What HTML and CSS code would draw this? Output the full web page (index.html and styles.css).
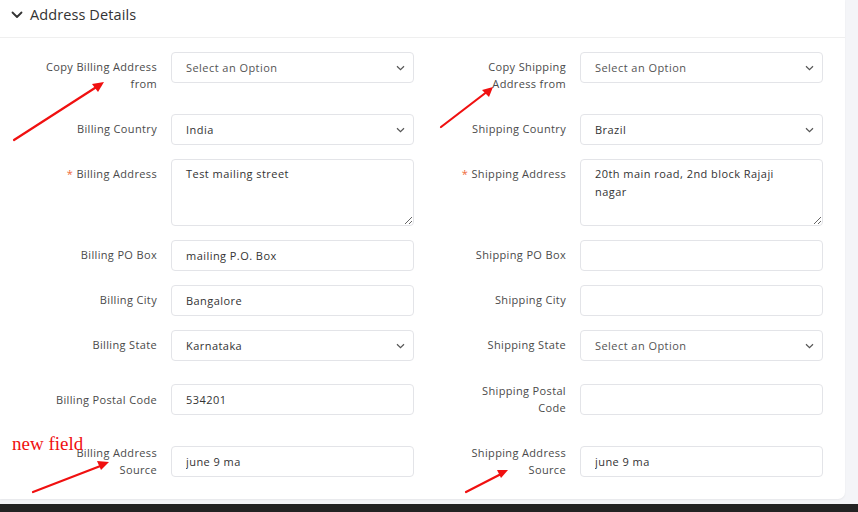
FILE: index.html
```html
<!DOCTYPE html>
<html>
<head>
<meta charset="utf-8">
<link rel="stylesheet" href="styles.css">
</head>
<body>
<div class="page">
  <section class="card">
    <header class="card-head">
      <svg class="head-chev" width="12" height="8" viewBox="0 0 12 8"><path d="M1.5 1.5 L6 6 L10.5 1.5" fill="none" stroke="#333" stroke-width="1.8" stroke-linecap="round" stroke-linejoin="round"/></svg>
      <span class="head-title">Address Details</span>
    </header>
    <div class="fields">
      <div class="field">
        <label class="lbl">Copy Billing Address<br>from</label>
        <div class="ctrl select"><span class="ph">Select an Option</span><svg class="chev" width="9" height="6" viewBox="0 0 9 6"><path d="M1 1.2 L4.5 4.6 L8 1.2" fill="none" stroke="#555" stroke-width="1.2"/></svg></div>
      </div>
      <div class="field">
        <label class="lbl">Copy Shipping<br>Address from</label>
        <div class="ctrl select"><span class="ph">Select an Option</span><svg class="chev" width="9" height="6" viewBox="0 0 9 6"><path d="M1 1.2 L4.5 4.6 L8 1.2" fill="none" stroke="#555" stroke-width="1.2"/></svg></div>
      </div>

      <div class="field">
        <label class="lbl">Billing Country</label>
        <div class="ctrl select"><span>India</span><svg class="chev" width="9" height="6" viewBox="0 0 9 6"><path d="M1 1.2 L4.5 4.6 L8 1.2" fill="none" stroke="#555" stroke-width="1.2"/></svg></div>
      </div>
      <div class="field">
        <label class="lbl">Shipping Country</label>
        <div class="ctrl select"><span>Brazil</span><svg class="chev" width="9" height="6" viewBox="0 0 9 6"><path d="M1 1.2 L4.5 4.6 L8 1.2" fill="none" stroke="#555" stroke-width="1.2"/></svg></div>
      </div>

      <div class="field">
        <label class="lbl"><span class="req">*</span> Billing Address</label>
        <textarea class="ctrl area" readonly>Test mailing street</textarea>
      </div>
      <div class="field">
        <label class="lbl"><span class="req">*</span> Shipping Address</label>
        <textarea class="ctrl area" readonly>20th main road, 2nd block Rajaji nagar</textarea>
      </div>

      <div class="field">
        <label class="lbl">Billing PO Box</label>
        <input class="ctrl" value="mailing P.O. Box" readonly>
      </div>
      <div class="field">
        <label class="lbl">Shipping PO Box</label>
        <input class="ctrl" value="" readonly>
      </div>

      <div class="field">
        <label class="lbl">Billing City</label>
        <input class="ctrl" value="Bangalore" readonly>
      </div>
      <div class="field">
        <label class="lbl">Shipping City</label>
        <input class="ctrl" value="" readonly>
      </div>

      <div class="field">
        <label class="lbl">Billing State</label>
        <div class="ctrl select"><span>Karnataka</span><svg class="chev" width="9" height="6" viewBox="0 0 9 6"><path d="M1 1.2 L4.5 4.6 L8 1.2" fill="none" stroke="#555" stroke-width="1.2"/></svg></div>
      </div>
      <div class="field">
        <label class="lbl">Shipping State</label>
        <div class="ctrl select"><span class="ph">Select an Option</span><svg class="chev" width="9" height="6" viewBox="0 0 9 6"><path d="M1 1.2 L4.5 4.6 L8 1.2" fill="none" stroke="#555" stroke-width="1.2"/></svg></div>
      </div>

      <div class="field mid">
        <label class="lbl">Billing Postal Code</label>
        <input class="ctrl" value="534201" readonly>
      </div>
      <div class="field mid">
        <label class="lbl">Shipping Postal<br>Code</label>
        <input class="ctrl" value="" readonly>
      </div>

      <div class="field mid">
        <label class="lbl">Billing Address<br>Source</label>
        <input class="ctrl" value="june 9 ma" readonly>
      </div>
      <div class="field mid">
        <label class="lbl">Shipping Address<br>Source</label>
        <input class="ctrl" value="june 9 ma" readonly>
      </div>
    </div>
  </section>
  <footer class="bottom-bar"></footer>

  <div class="note">new field</div>
  <svg class="marks" width="858" height="512" viewBox="0 0 858 512">
    <g stroke="#f01010" stroke-width="2.2" fill="none" stroke-linecap="round">
      <line x1="14" y1="140" x2="98" y2="86"/>
      <line x1="441" y1="127" x2="488" y2="91"/>
      <line x1="33" y1="492" x2="103" y2="465"/>
      <line x1="466" y1="492" x2="503" y2="473"/>
    </g>
    <g fill="#f01010">
      <polygon points="104,82 92,84 98,92"/>
      <polygon points="493,87 482,90 489,97"/>
      <polygon points="109,462 97,461 101,470"/>
      <polygon points="508,470 497,470 501,478"/>
    </g>
  </svg>
</div>
</body>
</html>
```
FILE: styles.css
```css
* { box-sizing: border-box; }
html, body { margin: 0; padding: 0; }
body {
  background: #f4f5f8;
  font-family: "Open Sans", "Noto Sans", sans-serif;
  width: 858px;
  height: 512px;
  overflow: hidden;
}
.page {
  position: relative;
  width: 858px;
  height: 512px;
  display: flex;
  flex-direction: column;
}
.card {
  width: 845px;
  height: 499px;
  background: #fff;
  border-radius: 0 0 7px 0;
  box-shadow: 0 1px 2px rgba(0,0,0,0.06);
}
.card-head {
  display: flex;
  align-items: center;
  gap: 7px;
  height: 38px;
  padding: 4px 11px 11px;
  border-bottom: 1px solid #efefef;
}
.head-chev { display: block; }
.head-title {
  font-size: 14.5px;
  line-height: 22px;
  color: #333;
  letter-spacing: 0.1px;
}
.fields {
  display: grid;
  grid-template-columns: 377px 377px;
  column-gap: 32px;
  row-gap: 14px;
  padding: 14px 0 0 37px;
}
.field {
  display: grid;
  grid-template-columns: 120px 243px;
  column-gap: 14px;
  align-items: start;
}
.field.mid { align-items: center; }
.lbl {
  text-align: right;
  font-size: 11px;
  line-height: 17px;
  letter-spacing: 0.35px;
  white-space: nowrap;
  color: #4a4a4a;
  padding: 6px 0 8px;
}
.field.mid .lbl { padding: 7px 0; }
.req { color: #ef6a3a; }
.ctrl {
  height: 31px;
  width: 243px;
  border: 1px solid #e3e4e8;
  border-radius: 4px;
  background: #fff;
  font-family: "Open Sans", "Noto Sans", sans-serif;
  font-size: 11px;
  letter-spacing: 0.45px;
  color: #333;
  padding: 0 14px;
  margin: 0;
  outline: none;
}
.select {
  display: flex;
  align-items: center;
  justify-content: space-between;
  padding: 0 8px 0 14px;
}
.select .ph { color: #555; }
.chev { display: block; }
.area {
  height: 67px;
  resize: vertical;
  padding: 5px 30px 6px 14px;
  line-height: 18px;
  display: block;
}
.bottom-bar {
  margin-top: 5px;
  flex: 1;
  background: #232323;
}
.note {
  position: absolute;
  left: 12px;
  top: 433px;
  font-family: "Liberation Serif", serif;
  font-size: 19px;
  color: #f01010;
}
.marks {
  position: absolute;
  left: 0;
  top: 0;
  pointer-events: none;
}
```
